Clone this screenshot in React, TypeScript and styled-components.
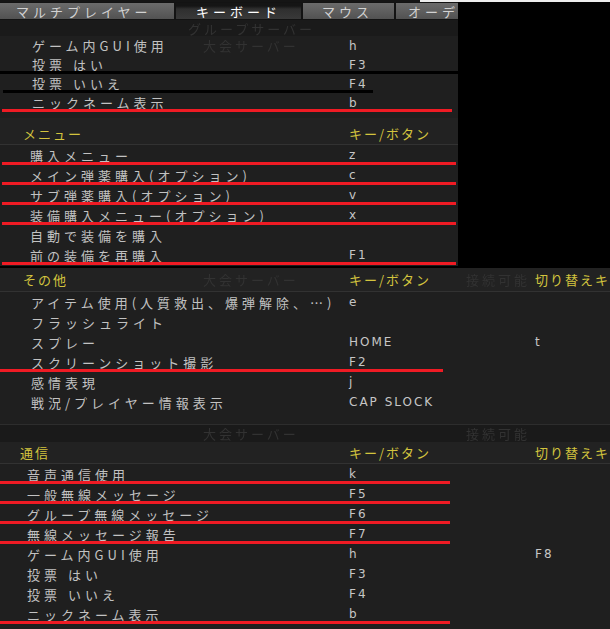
import styled, { createGlobalStyle } from "styled-components";

const GlobalStyle = createGlobalStyle`
  html, body {
    margin: 0;
    padding: 0;
    background: #000;
  }
  body {
    font-family: "Noto Sans CJK JP", "Noto Sans", sans-serif;
  }
`;

const Screen = styled.div`
  width: 610px;
  height: 629px;
  overflow: hidden;
  background: #000;
  display: flex;
  flex-direction: column;
`;

const TopEdge = styled.div`
  height: 2px;
  flex-shrink: 0;
  background: linear-gradient(to right, #151515 0 420px, #ededed 420px);
`;

const Panel = styled.section<{ $width: number; $pt?: number; $pb?: number; $mt?: number }>`
  width: ${(p) => p.$width}px;
  flex-shrink: 0;
  box-sizing: border-box;
  padding-top: ${(p) => p.$pt ?? 0}px;
  padding-bottom: ${(p) => p.$pb ?? 0}px;
  margin-top: ${(p) => p.$mt ?? 0}px;
  background: #1f1f1f;
  overflow: hidden;
`;

const TabBar = styled.div`
  display: flex;
  gap: 2px;
  height: 18px;
  background: #131313;
`;

const Tab = styled.div<{ $width: number; $pad: number; $active?: boolean }>`
  width: ${(p) => p.$width}px;
  flex-shrink: 0;
  height: 16px;
  margin-top: 1px;
  box-sizing: border-box;
  padding-left: ${(p) => p.$pad}px;
  display: flex;
  align-items: center;
  overflow: hidden;
  white-space: nowrap;
  font-size: 13px;
  letter-spacing: 4px;
  line-height: 1;
  color: ${(p) => (p.$active ? "#ffffff" : "#d2d2d2")};
  background: ${(p) =>
    p.$active
      ? "linear-gradient(#151515 0 3px, #2f2f2f 6px, #393939)"
      : "linear-gradient(#6b6b6b, #525252)"};
`;

const Grid = `
  display: grid;
  grid-template-columns: 203px 146px 117px 69px 1fr;
  align-items: center;
  white-space: nowrap;
`;

const Strip = styled.div<{ $h: number; $topLine?: boolean }>`
  ${Grid}
  height: ${(p) => p.$h}px;
  box-sizing: border-box;
  border-top: ${(p) => (p.$topLine ? "1px solid #2d2d2d" : "none")};
  background: #1a1a1a;
  overflow: hidden;
`;

const Header = styled.div<{ $h: number; $pt?: number; $indent: number }>`
  ${Grid}
  height: ${(p) => p.$h}px;
  box-sizing: border-box;
  padding-top: ${(p) => p.$pt ?? 0}px;
  border-bottom: 1px solid #323232;
  background: #222;
  color: #d3c43e;
  font-size: 13px;
  letter-spacing: 2px;
  line-height: 1;

  & > span:first-child {
    padding-left: ${(p) => p.$indent}px;
  }
`;

const Row = styled.div<{
  $h: number;
  $line?: string;
  $lineLeft?: number;
  $lineWidth?: number;
}>`
  ${Grid}
  position: relative;
  height: ${(p) => p.$h}px;
  line-height: 1;

  &::after {
    content: "";
    display: ${(p) => (p.$line ? "block" : "none")};
    position: absolute;
    left: ${(p) => p.$lineLeft ?? 0}px;
    bottom: 0;
    width: ${(p) => p.$lineWidth ?? 0}px;
    height: 3px;
    background: ${(p) => p.$line};
  }
`;

const Label = styled.span<{ $indent: number }>`
  grid-column: 1;
  padding-left: ${(p) => p.$indent}px;
  color: #c2c2c2;
  font-size: 13px;
  letter-spacing: 4px;
`;

const Ghost = styled.span<{ $col: number; $shift?: number }>`
  grid-column: ${(p) => p.$col};
  margin-left: ${(p) => p.$shift ?? 0}px;
  color: #323232;
  font-size: 13px;
  line-height: 1;
  letter-spacing: 3px;
  filter: blur(0.5px);
`;

const KeyCell = styled.span<{ $col: number }>`
  grid-column: ${(p) => p.$col};
  color: #c6c6c6;
  font-family: "DejaVu Sans", "Noto Sans CJK JP", sans-serif;
  font-size: 12px;
  letter-spacing: 2px;
`;

const HeadCell = styled.span<{ $col: number }>`
  grid-column: ${(p) => p.$col};
`;

type Binding = {
  label: string;
  key?: string;
  toggle?: string;
  ghost?: string;
  line?: string;
  lineLeft?: number;
  lineWidth?: number;
};

const RED = "#ef1b24";
const BLACK = "#000";

const panelOne: Binding[] = [
  { label: "ゲーム内GUI使用", key: "h", ghost: "大会サーバー" },
  { label: "投票 はい", key: "F3", line: BLACK, lineLeft: 0, lineWidth: 458 },
  { label: "投票 いいえ", key: "F4", line: BLACK, lineLeft: 3, lineWidth: 370 },
  { label: "ニックネーム表示", key: "b", line: RED, lineLeft: 2, lineWidth: 450 },
];

const redTwo = { line: RED, lineLeft: 2, lineWidth: 454 };
const panelTwo: Binding[] = [
  { label: "購入メニュー", key: "z", ...redTwo },
  { label: "メイン弾薬購入(オプション)", key: "c", ...redTwo },
  { label: "サブ弾薬購入(オプション)", key: "v", ...redTwo },
  { label: "装備購入メニュー(オプション)", key: "x", ...redTwo },
  { label: "自動で装備を購入" },
  { label: "前の装備を再購入", key: "F1", ...redTwo },
];

const panelThree: Binding[] = [
  { label: "アイテム使用(人質救出、爆弾解除、…)", key: "e" },
  { label: "フラッシュライト" },
  { label: "スプレー", key: "HOME", toggle: "t" },
  { label: "スクリーンショット撮影", key: "F2", line: RED, lineLeft: 0, lineWidth: 443 },
  { label: "感情表現", key: "j" },
  { label: "戦況/プレイヤー情報表示", key: "CAP SLOCK" },
];

const redFour = { line: RED, lineLeft: 0, lineWidth: 450 };
const panelFour: Binding[] = [
  { label: "音声通信使用", key: "k", ...redFour },
  { label: "一般無線メッセージ", key: "F5", ...redFour },
  { label: "グループ無線メッセージ", key: "F6", ...redFour },
  { label: "無線メッセージ報告", key: "F7", ...redFour },
  { label: "ゲーム内GUI使用", key: "h", toggle: "F8" },
  { label: "投票 はい", key: "F3" },
  { label: "投票 いいえ", key: "F4" },
  { label: "ニックネーム表示", key: "b", ...redFour },
];

const BindingRows = ({ rows, h, indent }: { rows: Binding[]; h: number; indent: number }) => (
  <>
    {rows.map((r, i) => (
      <Row
        key={i}
        $h={h}
        $line={r.line}
        $lineLeft={r.lineLeft}
        $lineWidth={r.lineWidth}
      >
        <Label $indent={indent}>{r.label}</Label>
        {r.ghost && <Ghost $col={2}>{r.ghost}</Ghost>}
        {r.key && <KeyCell $col={3}>{r.key}</KeyCell>}
        {r.toggle && <KeyCell $col={5}>{r.toggle}</KeyCell>}
      </Row>
    ))}
  </>
);

export default function App() {
  return (
    <>
      <GlobalStyle />
      <Screen>
        <TopEdge />

        <Panel $width={458} $pb={6}>
          <TabBar>
            <Tab $width={174} $pad={16}>マルチプレイヤー</Tab>
            <Tab $width={125} $pad={20} $active>キーボード</Tab>
            <Tab $width={91} $pad={19}>マウス</Tab>
            <Tab $width={62} $pad={12}>オーディオ</Tab>
          </TabBar>
          <Strip $h={16}>
            <span />
            <Ghost $col={2} $shift={-15}>グループサーバー</Ghost>
          </Strip>
          <BindingRows rows={panelOne} h={19} indent={32} />
        </Panel>

        <Panel $width={458} $pb={1}>
          <Header $h={27} $pt={4} $indent={23}>
            <HeadCell $col={1}>メニュー</HeadCell>
            <HeadCell $col={3}>キー/ボタン</HeadCell>
          </Header>
          <BindingRows rows={panelTwo} h={20} indent={30} />
        </Panel>

        <Panel $width={610} $mt={2} $pb={8}>
          <Header $h={24} $indent={23}>
            <HeadCell $col={1}>その他</HeadCell>
            <Ghost $col={2}>大会サーバー</Ghost>
            <HeadCell $col={3}>キー/ボタン</HeadCell>
            <Ghost $col={4}>接続可能</Ghost>
            <HeadCell $col={5}>切り替えキー</HeadCell>
          </Header>
          <BindingRows rows={panelThree} h={20} indent={31} />
        </Panel>

        <Panel $width={610} $pt={4} $pb={5}>
          <Strip $h={18} $topLine>
            <span />
            <Ghost $col={2}>大会サーバー</Ghost>
            <span />
            <Ghost $col={4}>接続可能</Ghost>
          </Strip>
          <Header $h={22} $indent={20}>
            <HeadCell $col={1}>通信</HeadCell>
            <HeadCell $col={3}>キー/ボタン</HeadCell>
            <HeadCell $col={5}>切り替えキー</HeadCell>
          </Header>
          <BindingRows rows={panelFour} h={20} indent={27} />
        </Panel>
      </Screen>
    </>
  );
}
